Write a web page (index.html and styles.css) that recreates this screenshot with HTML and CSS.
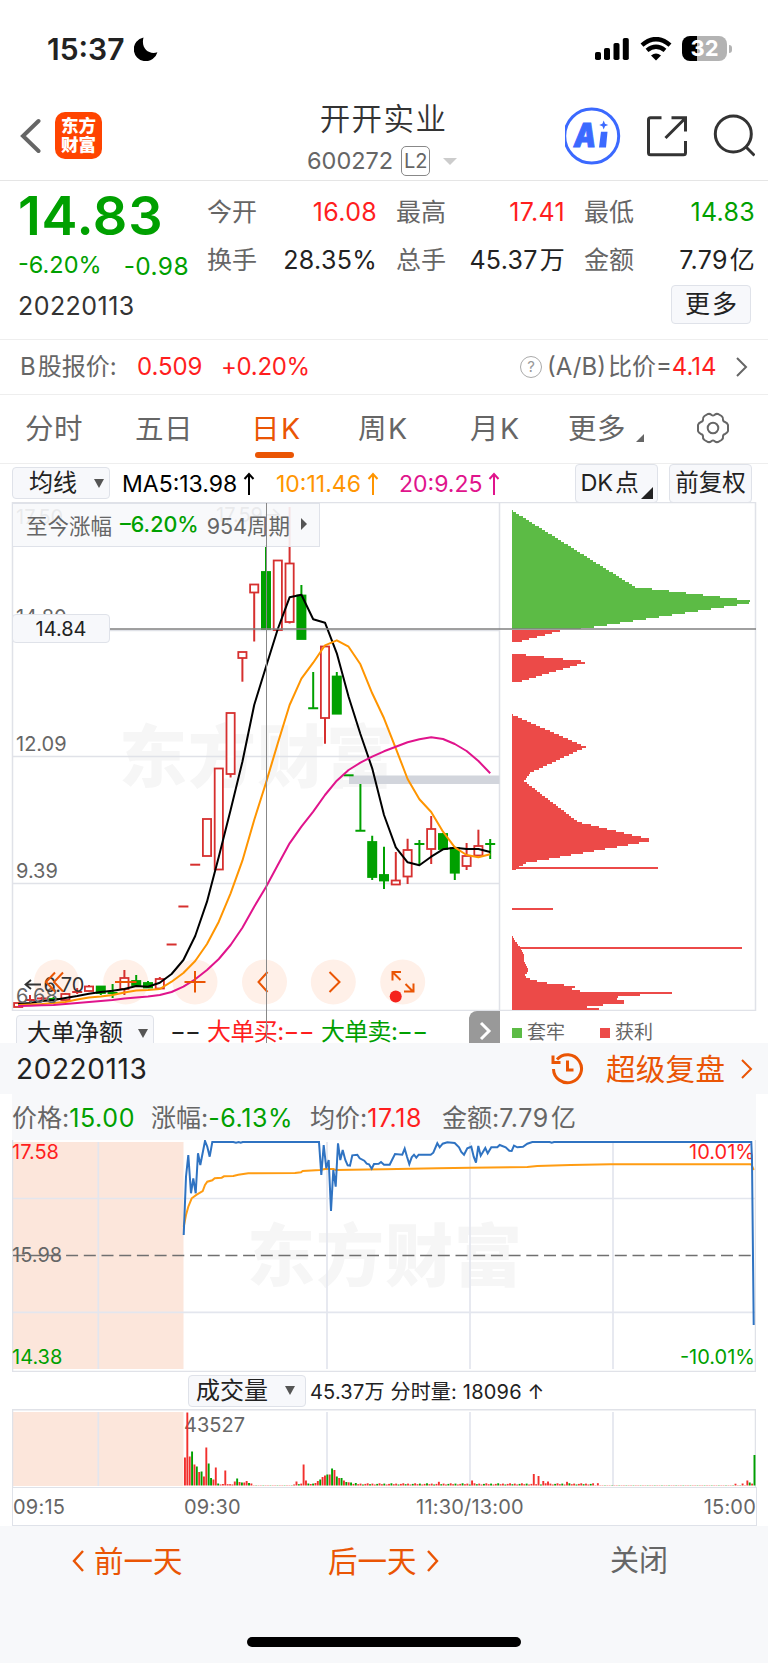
FILE: index.html
```html
<!DOCTYPE html>
<html lang="zh-CN">
<head>
    <meta charset="UTF-8">
    <meta name="viewport" content="width=device-width, initial-scale=1.0">
    <title>开开实业 600272</title>
    <link rel="stylesheet" href="styles.css">
</head>
<body>
    <div class="status-bar">
        <span class="clock">15:37</span>
        <svg class="moon" width="24" height="24" viewBox="0 0 24 24"><path d="M9.5 0.4A12 12 0 1 0 23.4 15.2C15.5 18 6.5 12 9.5 0.4Z"/></svg>
        <svg class="signal" width="34" height="24" viewBox="0 0 34 24">
            <rect x="0" y="15" width="6" height="8" rx="1.8"/>
            <rect x="9" y="11" width="6" height="12" rx="1.8"/>
            <rect x="18.5" y="6" width="6" height="17" rx="1.8"/>
            <rect x="27.8" y="1" width="6" height="22" rx="1.8"/>
        </svg>
        <svg class="wifi" width="32" height="24" viewBox="0 0 32 24">
            <path d="M2 8.2Q16 -4 30 8.2M7 13.4Q16 6.2 25 13.4" fill="none" stroke="#000" stroke-width="4.4"/>
            <path d="M11 18.4Q16 14.4 21 18.4L16 23.6Z"/>
        </svg>
        <div class="battery"><span>32</span></div>
        <i class="battery-cap"></i>
    </div>

    <header class="nav">
        <svg class="back" width="22" height="36" viewBox="0 0 22 36"><path d="M19.500 3L4 18L19.500 33" fill="none" stroke="#666" stroke-width="4" stroke-linecap="round"/></svg>
        <div class="logo">东方<br>财富</div>
        <div class="nav-title">
            <h1>开开实业</h1>
            <p>600272<span class="level">L2</span><i class="caret"></i></p>
        </div>
        <svg class="nav-icons" width="190" height="64" viewBox="566 104 190 64" fill="none" stroke="#333" stroke-width="3">
            <circle cx="592.7" cy="136" r="27" stroke="#3b69ff"/>
            <text class="ai" x="575" y="147" textLength="22" lengthAdjust="spacingAndGlyphs">A</text>
            <path d="M602 131.700h6.500l-1.500 15.800h-7z" fill="#3b69ff" stroke="none"/>
            <path d="M604.700 120.500l1.300 3.200 3.200 1.300-3.200 1.300-1.300 3.200-1.300-3.200-3.200-1.300 3.200-1.300z" fill="#3b69ff" stroke="none"/>
            <path d="M662.500 117.800H651.500Q649.500 117.800 649.500 119.800V152.800Q649.500 154.800 651.500 154.800H684.500Q686.500 154.800 686.500 152.800V141M672.500 117.800H686.500V131.500M686 118.500L666.500 138"/>
            <circle cx="734.300" cy="134" r="18"/>
            <path d="M747 147L755.500 155.500"/>
        </svg>
    </header>

    <section class="quote">
        <div class="quote-main">
            <div class="price down">14.83</div>
            <div class="change down"><span>-6.20%</span><span class="diff">-0.98</span></div>
            <div class="date">20220113</div>
        </div>
        <div class="quote-grid">
            <span>今开</span><b class="up">16.08</b>
            <span>最高</span><b class="up">17.41</b>
            <span>最低</span><b class="down">14.83</b>
            <span>换手</span><b>28.35%</b>
            <span>总手</span><b>45.37<em>万</em></b>
            <span>金额</span><b>7.79<em>亿</em></b>
            <button class="more">更多</button>
        </div>
    </section>

    <section class="bshare">
        <span class="b-label">B<em>股报价:</em></span>
        <span class="b-price up">0.509</span>
        <span class="b-rate up">+0.20%</span>
        <span class="help">?</span>
        <span class="ratio">(A/B)<em>比价=</em><b class="up">4.14</b></span>
        <svg width="14" height="24" viewBox="0 0 14 24"><path d="M2 3L11 12L2 21" fill="none" stroke="#666" stroke-width="2"/></svg>
    </section>

    <nav class="tabs">
        <a class="t1">分时</a>
        <a class="t2">五日</a>
        <a class="t3 active">日<em>K</em></a>
        <a class="t4">周<em>K</em></a>
        <a class="t5">月<em>K</em></a>
        <a class="t6">更多<i class="corner"></i></a>
        <svg class="gear" width="34" height="34" viewBox="-17 -17 34 34" fill="none" stroke="#666" stroke-width="2">
            <circle r="5.300"/>
            <path d="M-5 -14Q-2.500 -14.500 -1.500 -13Q0 -12 1.500 -13Q2.500 -14.500 5 -14L8.500 -12Q10.500 -10.500 10 -8.500Q10 -6.500 12 -6Q14.500 -5 15 -3V3Q14.500 5 12 6Q10 6.500 10 8.500Q10.500 10.500 8.500 12L5 14Q2.500 14.500 1.500 13Q0 12 -1.500 13Q-2.500 14.500 -5 14L-8.500 12Q-10.500 10.500 -10 8.500Q-10 6.500 -12 6Q-14.500 5 -15 3V-3Q-14.500 -5 -12 -6Q-10 -6.500 -10 -8.500Q-10.500 -10.500 -8.500 -12Z"/>
        </svg>
    </nav>

    <div class="ma-row">
        <button class="select ma-select">均线<i class="tri"></i></button>
        <span class="ma ma5">MA5:13.98<svg width="12" height="24" viewBox="0 0 12 24"><path d="M6 23V2M1.500 7L6 2L10.500 7"/></svg></span>
        <span class="ma ma10">10:11.46<svg width="12" height="24" viewBox="0 0 12 24"><path d="M6 23V2M1.500 7L6 2L10.500 7"/></svg></span>
        <span class="ma ma20">20:9.25<svg width="12" height="24" viewBox="0 0 12 24"><path d="M6 23V2M1.500 7L6 2L10.500 7"/></svg></span>
        <button class="tag dk">DK<em>点</em><i class="corner"></i></button>
        <button class="tag">前复权</button>
    </div>

    <div class="kline">
        <svg id="kline" width="768" height="509" viewBox="0 502 768 509">
            <text class="watermark" x="119" y="782">东方财富</text>
            <path class="frame" d="M12.500 502.500H755.500V1010.500H12.500ZM499.500 502.500V1010.500M12.500 630.500H499.500M12.500 756.500H499.500M12.500 883.500H499.500"/>
            <g class="axis">
                <text x="16" y="524">17.50</text>
                <text x="216" y="522">17.59→</text>
                <text x="16" y="624">14.80</text>
                <text x="16" y="750.500">12.09</text>
                <text x="16" y="877.500">9.39</text>
            </g>
            <rect x="349" y="775.500" width="150.500" height="8.500" fill="#d2d5dc"/>
            <g class="pads">
                <circle cx="56.500" cy="982" r="22.500"/><circle cx="125.700" cy="982" r="22.500"/><circle cx="195" cy="982" r="22.500"/>
                <circle cx="264.500" cy="982" r="22.500"/><circle cx="333.300" cy="982" r="22.500"/><circle cx="402.700" cy="982" r="22.500"/>
            </g>
            <g id="candles"></g>
            <g id="averages" fill="none" stroke-width="2" stroke-linejoin="round"></g>
            <g id="chips" shape-rendering="crispEdges"></g>
            <text class="axis" x="16" y="1003">6.68</text>
            <path d="M41 984.500H26M31 980L25.500 984.500L31 989" fill="none" stroke="#333" stroke-width="1.800"/>
            <text class="low" x="43.500" y="991.500">6.70</text>
            <g fill="none" stroke="#ea5504" stroke-width="2">
                <path d="M55 972.500L46 982L55 991.500M63 972.500L54 982L63 991.500"/>
                <path d="M115 982H136.500M184.500 982H205.500M195 971V992.500"/>
                <path d="M267.500 972L258.500 982L267.500 992M329.500 972L339.500 982L329.500 992"/>
                <path d="M392.500 980.500V972H401M393 972.500L400.500 980M413.500 983.500V991.500H404M413 991.500L405.500 984"/>
            </g>
            <circle cx="395.700" cy="996.500" r="6" fill="#f5221d"/>
            <path d="M110 629H756" stroke="#808080" stroke-width="1.700"/>
        </svg>
        <div class="gain">至今涨幅<b>–6.20%</b>954周期<i></i></div>
        <div class="cursor-price">14.84</div>
        <i class="crosshair"></i>
    </div>

    <div class="sub-row">
        <button class="select sub-select">大单净额<i class="tri"></i></button>
        <span class="none">−−</span>
        <span class="buy">大单买:−−</span>
        <span class="sell">大单卖:−−</span>
        <div class="expand"><svg width="14" height="22" viewBox="0 0 14 22"><path d="M3 3L11 11L3 19" fill="none" stroke="#fff" stroke-width="3"/></svg></div>
        <span class="legend"><i class="lock"></i>套牢</span>
        <span class="legend"><i class="win"></i>获利</span>
    </div>

    <section class="replay-head">
        <span class="replay-date">20220113</span>
        <svg width="34" height="34" viewBox="0 0 34 34" fill="none" stroke="#ea5504" stroke-width="3"><path d="M3.500 17A14 14 0 1 0 7 7.500M3 3.500V10.500H10.500M17.500 8.500V18H23.500"/></svg>
        <span class="replay-link">超级复盘</span>
        <svg width="14" height="22" viewBox="0 0 14 22"><path d="M2 2L11 11L2 20" fill="none" stroke="#ea5504" stroke-width="2"/></svg>
    </section>

    <section class="replay">
        <div class="replay-info">
            <span>价格:<b class="down">15.00</b></span>
            <span>涨幅:<b class="down">-6.13%</b></span>
            <span>均价:<b class="up">17.18</b></span>
            <span>金额:<b>7.79</b><em>亿</em></span>
        </div>
        <svg id="minute" width="744" height="232" viewBox="12 1140 744 232">
            <rect x="13" y="1142" width="170.500" height="227" fill="#fce6db"/>
            <text class="watermark" x="247" y="1281">东方财富</text>
            <path class="grid" d="M98.300 1142V1369M327 1142V1369M470 1142V1369M613 1142V1369M13 1198.500H755M13 1312.300H755"/>
            <path class="frame" d="M12.500 1140V1371.500H755.500V1140"/>
            <path d="M13 1255.500H752" stroke="#707070" stroke-width="1.500" stroke-dasharray="12 5.700"/>
            <g class="axis">
                <text class="up" x="12" y="1159">17.58</text>
                <text x="12" y="1261.500">15.98</text>
                <text class="down" x="12" y="1363.500">14.38</text>
                <text class="up" x="755" y="1159" text-anchor="end">10.01%</text>
                <text class="down" x="755" y="1363.500" text-anchor="end">-10.01%</text>
            </g>
        </svg>
        <div class="volume-row">
            <button class="select volume-select">成交量<i class="tri"></i></button>
            <span>45.37万 分时量: 18096 ↑</span>
        </div>
        <svg id="volume" width="744" height="78" viewBox="12 1409 744 78">
            <rect x="13" y="1412" width="170.500" height="74" fill="#fce6db"/>
            <path class="grid" d="M98.300 1412V1486M327 1412V1486M470 1412V1486M613 1412V1486"/>
            <path class="frame" d="M12.500 1487V1409.700H755.500V1487"/>
            <text class="axis" x="184" y="1431.500">43527</text>
        </svg>
        <div class="times"><span>09:15</span><span>09:30</span><span>11:30/13:00</span><span>15:00</span></div>
    </section>

    <footer class="footer">
        <a class="prev"><svg width="14" height="24" viewBox="0 0 14 24"><path d="M12 2L3 12L12 22"/></svg>前一天</a>
        <a class="next">后一天<svg width="14" height="24" viewBox="0 0 14 24"><path d="M2 2L11 12L2 22"/></svg></a>
        <a class="close">关闭</a>
        <div class="home-bar"></div>
    </footer>

    <script src="charts.js"></script>
</body>
</html>
```
FILE: charts.js
```js
const NS = 'http://www.w3.org/2000/svg';

function draw(parent, tag, attrs) {
    const el = document.createElementNS(NS, tag);
    for (const key in attrs) el.setAttribute(key, attrs[key]);
    parent.appendChild(el);
}

const RED = '#d6302f';
const GREEN = '#00a000';
const STEP = 11.8;
const START = 18.2;

// [color, high, body top, body bottom, low]
const candles = [
    ['r', 1003, 1003, 1007, 1007], ['r', 995, 1000, 1000, 1003], ['r', 997, 998.5, 998.5, 1000],
    ['g', 997, 999, 999, 1001], ['r', 993, 994, 1000, 1000], ['r', 988, 992, 992, 994],
    ['r', 985, 986.5, 991, 991], ['g', 986, 986.5, 993, 995], ['g', 984, 993, 993, 998],
    ['r', 970, 978, 989, 995], ['g', 975, 981, 985, 985], ['g', 981, 983, 987.5, 988],
    ['r', 977, 979, 988.5, 988.5], ['r', 944.5, 944.5, 944.5, 944.5], ['r', 906.5, 906.5, 906.5, 906.5],
    ['r', 864.7, 864.7, 864.7, 864.7], ['r', 819, 819, 856, 856], ['r', 768.5, 768.5, 869.5, 869.5],
    ['r', 713, 713, 774, 777.5], ['r', 652, 652, 658, 681.7], ['r', 584.5, 584.5, 592.5, 641.5],
    ['g', 545, 572, 629, 629], ['r', 560.5, 560.5, 630, 630], ['r', 507, 563.5, 622, 623.5],
    ['g', 585, 595.5, 639, 639], ['g', 672, 708.3, 708.3, 708.3], ['r', 646.5, 646.5, 718, 743.7],
    ['g', 672, 676.5, 713.7, 713.7], ['g', 775.3, 775.3, 775.3, 775.3], ['g', 784, 830.7, 830.7, 830.7],
    ['g', 835.7, 842, 877, 880], ['g', 846.7, 875, 880.5, 889], ['r', 852, 880.5, 884.5, 884.5],
    ['r', 838.7, 850, 876.5, 884], ['g', 840, 844, 844, 865], ['r', 816, 829, 849, 864],
    ['g', 833, 834, 849, 849], ['g', 847, 848, 872.7, 880], ['r', 843, 856, 866, 870],
    ['r', 829.7, 846, 855.5, 855.5], ['g', 839, 844, 844, 859]
];

const candleLayer = document.getElementById('candles');
candles.forEach(([c, high, top, bottom, low], i) => {
    const x = START + i * STEP;
    const color = c === 'r' ? RED : GREEN;
    if (top === bottom) {
        draw(candleLayer, 'path', { d: `M${x} ${high}V${low}M${x - 5} ${top}H${x + 5}`, stroke: color, 'stroke-width': 2 });
        return;
    }
    draw(candleLayer, 'path', { d: `M${x} ${high}V${top}M${x} ${bottom}V${low}`, stroke: color, 'stroke-width': 2 });
    draw(candleLayer, 'rect', {
        x: x - 4.1, y: top, width: 8.2, height: bottom - top,
        fill: c === 'r' ? '#fff' : color, stroke: color, 'stroke-width': 1.8
    });
});

// moving averages, one value per candle
const averages = {
    '#000': [1004, 1003, 1001, 1000, 998, 996, 993.7, 992, 990.7, 989, 986, 986.7, 982.7, 974, 960, 936, 901.7, 856.7, 810,
        761.7, 705, 666.7, 629, 597.3, 594.7, 619.3, 622.7, 653.3, 696.7, 734, 768.3, 815, 847.3, 862.3, 865.3, 856.7, 849.3,
        847.7, 849, 849, 852],
    '#ff9500': [1005, 1004.5, 1004, 1003, 1002, 999.5, 997.5, 996.5, 995, 992.5, 990.5, 990, 989, 981.7, 973, 961, 944, 921.7,
        893.3, 860.7, 820, 782.7, 743.3, 705, 678.7, 662.7, 645.3, 640.3, 646.7, 664.3, 693.3, 718.3, 748.3, 779, 799.3, 812,
        831.7, 847.3, 855, 857.3, 854.3],
    '#e0148c': [1006, 1005.7, 1005.3, 1005, 1004, 1003, 1002, 1001, 1000, 998.5, 997.5, 996.5, 995, 992, 986.7, 979.3, 970, 959,
        945, 927.7, 906.7, 887, 865, 843.3, 826.7, 811.7, 795, 780.7, 770, 762.7, 756.7, 751.3, 746.7, 742.3, 739.3, 737.3,
        739, 744, 751, 761, 773.3]
};

for (const color in averages) {
    const points = averages[color].map((y, i) => `${START + i * STEP},${y}`).join(' ');
    draw(document.getElementById('averages'), 'polyline', { points, stroke: color });
}

// chip distribution: [y, right edge] outlines filled with thin price bars
const chips = [
    { color: '#5cbb45', line: [[510, 513], [586, 635], [599, 745], [601, 755], [603, 743], [629, 575]] },
    { color: '#ec4a48', line: [[630, 560], [642, 514]] },
    { color: '#ec4a48', line: [[654, 526], [661, 590], [663, 580], [682, 515]] },
    { color: '#ec4a48', line: [[714, 513], [746, 586], [772, 530], [780, 524], [821, 578], [839, 653], [841, 645], [862, 526], [870, 512]] },
    { color: '#ec4a48', line: [[867, 657.5], [869, 657.5]] },
    { color: '#ec4a48', line: [[908, 552.5], [910, 552.5]] },
    { color: '#ec4a48', line: [[936, 512.5], [948, 521], [953, 524], [960, 524], [969, 528.5], [975, 524.5], [978, 530], [981, 540],
        [983.5, 557], [985, 577], [988.5, 571], [990.5, 583], [992, 672], [994, 640], [996, 618], [997.5, 609], [999, 632],
        [1001, 615], [1002.5, 628], [1004.5, 594], [1006, 587], [1008, 599], [1010, 627]] },
    { color: '#ec4a48', line: [[947, 741.5], [949, 741.5]] }
];

function edgeAt(line, y) {
    for (let i = 1; i < line.length; i++) {
        const [y0, x0] = line[i - 1];
        const [y1, x1] = line[i];
        if (y <= y1) return x0 + (x1 - x0) * Math.max(0, y - y0) / (y1 - y0);
    }
    return line[line.length - 1][1];
}

const chipLayer = document.getElementById('chips');
chips.forEach(({ color, line }) => {
    const end = line[line.length - 1][0];
    for (let y = line[0][0]; y < end; y += 2) {
        draw(chipLayer, 'rect', { x: 512, y, width: Math.max(1, edgeAt(line, y) - 512), height: Math.min(2, end - y), fill: color });
    }
});

// intraday lines, in thirds of a pixel from (0, 1060)
const price = [551,525, 558,350, 565,285, 573,400, 580,355, 587,400, 594,280, 601,315, 615,243, 622,260, 629,290, 637,246,
    700,246, 708,248, 716,246, 722,248, 728,246, 957,246, 964,345, 971,255, 979,325, 986,300, 993,453, 1000,330, 1007,380,
    1014,250, 1021,300, 1028,270, 1036,300, 1043,316, 1050,317, 1057,286, 1072,284, 1079,295, 1093,302, 1100,311, 1107,313,
    1115,326, 1122,312, 1136,311, 1143,306, 1152,314, 1169,314, 1176,300, 1185,282, 1207,284, 1214,266, 1221,290, 1228,312,
    1235,292, 1242,284, 1249,293, 1256,284, 1292,284, 1300,278, 1312,250, 1319,262, 1328,251, 1342,247, 1364,249, 1377,262,
    1384,276, 1392,284, 1402,265, 1414,260, 1421,290, 1428,308, 1435,258, 1442,287, 1456,264, 1463,280, 1474,262, 1492,262,
    1499,255, 1517,262, 1528,272, 1535,273, 1542,257, 1552,262, 1569,260, 1582,251, 1597,246, 1649,246, 1655,248, 1662,246,
    2254,246, 2256,300, 2261,795];
const average = [551,500, 558,465, 565,440, 575,415, 590,404, 608,393, 615,375, 622,365, 637,361, 644,355, 665,353, 672,349,
    700,348, 715,344, 745,340, 885,339, 903,337, 908,333, 960,330, 975,327, 1000,327, 1007,330, 1152,328, 1312,325, 1412,323,
    1582,321, 1612,318, 1712,315, 1832,313, 2254,313, 2257,320, 2261,330];

function intraday(values, color) {
    const points = values.map((v, i) => (i % 2 ? 1060 + v / 3 : v / 3).toFixed(1)).join(' ');
    draw(document.getElementById('minute'), 'polyline', { points, fill: 'none', stroke: color, 'stroke-width': 2 });
}

intraday(average, '#ff9c12');
intraday(price, '#2f73c2');

// volume bars: minute index -> [height, color]
const volumes = {
    0: [28, 'r'], 1: [73, 'r'], 2: [29, 'r'], 3: [34, 'g'], 4: [21, 'r'], 5: [19, 'g'], 6: [13.5, 'r'], 7: [14, 'g'],
    8: [9, 'r'], 9: [38, 'r'], 10: [22, 'g'], 11: [7.5, 'g'], 12: [6, 'r'], 13: [18, 'r'], 14: [2, 'g'], 15: [1, 'r'],
    16: [1.5, 'r'], 17: [15, 'r'], 18: [1.3, 'r'], 19: [1.3, 'r'], 21: [4, 'r'], 22: [7, 'g'], 23: [3.5, 'r'], 24: [3, 'g'],
    25: [3, 'r'], 26: [4.5, 'r'], 27: [2.5, 'g'], 28: [2, 'r'], 46: [1, 'r'], 47: [4, 'r'], 50: [21, 'r'], 51: [5, 'r'],
    52: [2, 'g'], 53: [1.5, 'r'], 55: [2.5, 'r'], 56: [4.5, 'r'], 57: [6, 'g'], 58: [8.5, 'r'], 59: [10, 'r'], 60: [11, 'g'],
    61: [11, 'r'], 62: [17, 'g'], 63: [15.5, 'r'], 64: [9, 'g'], 65: [7.5, 'r'], 66: [7.5, 'g'], 67: [5, 'r'], 68: [3.5, 'g'],
    69: [3.2, 'r'], 70: [3, 'g'], 72: [2.5, 'g'], 107: [3.7, 'r'], 121: [5, 'r'], 147: [11.5, 'r'], 149: [9.5, 'r'],
    151: [4.5, 'r'], 153: [4, 'r'], 161: [3.7, 'r'], 174: [2.3, 'r'], 232: [1.8, 'r'], 235: [2, 'r'], 237: [5, 'r'],
    238: [3, 'g'], 240: [30.5, 'g']
};

for (let i = 0; i <= 240; i++) {
    const quiet = (i > 28 && i < 47) || (i > 172 && i < 237);
    const [height, c] = volumes[i] || [quiet ? 0.3 : 1 + (i * 7 % 5) * 0.3, i % 3 ? 'r' : 'g'];
    draw(document.getElementById('volume'), 'rect', {
        x: 184 + i * 2.373, y: 1485.5 - height, width: 1.9, height, fill: c === 'r' ? '#f2302d' : GREEN
    });
}
```
FILE: styles.css
```css
* {
    box-sizing: border-box;
}

body {
    margin: 0;
    width: 768px;
    height: 1663px;
    overflow: hidden;
    background: #fff;
    color: #222;
    font-family: Inter, "Noto Sans CJK SC", sans-serif;
    font-weight: 400;
}

svg {
    display: block;
    flex: none;
}

em, b, i {
    font-style: normal;
    font-weight: inherit;
}

button {
    padding: 0;
    font: inherit;
    color: #222;
    background: #f7f8fb;
    border: 1.5px solid #dfe2e9;
    border-radius: 4px;
}

span, a, button {
    white-space: nowrap;
}

.up { color: #ff1e1e; }
.down { color: #00a000; }

/* status bar */
.status-bar {
    display: flex;
    align-items: center;
    height: 99px;
    padding: 0 0 2px 47px;
}

.clock {
    width: 87px;
    font-size: 30px;
    font-weight: 600;
}

.signal { margin-left: 437px; }
.wifi { margin-left: 11px; }

.battery {
    width: 45px;
    height: 25px;
    margin-left: 10px;
    border-radius: 8px;
    background: linear-gradient(90deg, #000 15px, #b3b3b3 15px);
    color: #fff;
    font-size: 22px;
    font-weight: 700;
    line-height: 25px;
    text-align: center;
}

.battery-cap {
    width: 3px;
    height: 8px;
    margin-left: 2px;
    border-radius: 0 4px 4px 0;
    background: #b3b3b3;
}

/* navigation */
.nav {
    display: flex;
    height: 82px;
    padding: 5px 12px 0 19px;
    border-bottom: 1.5px solid #e5e5e5;
}

.back { margin-top: 14px; }

.logo {
    width: 47px;
    height: 47px;
    margin: 8px 0 0 14px;
    padding-top: 4px;
    border-radius: 10px;
    background: #ff4400;
    color: #fff;
    font-size: 17.5px;
    font-weight: 900;
    line-height: 19px;
    text-align: center;
}

.nav-title {
    width: 260px;
    margin-left: 151px;
    text-align: center;
    color: #333;
}

.nav-title h1 {
    margin: 0;
    padding-left: 1px;
    font-size: 30.5px;
    font-weight: 350;
    line-height: 30px;
    letter-spacing: 1.4px;
}

.nav-title p {
    display: flex;
    align-items: center;
    margin: 10px 0 0 54px;
    color: #666;
    font-size: 23.5px;
    line-height: 34px;
}

.level {
    width: 29px;
    height: 30px;
    margin-left: 8px;
    border: 1.5px solid #888;
    border-radius: 5px;
    font-size: 20px;
    line-height: 28px;
    text-align: center;
}

.caret {
    margin-left: 13px;
    border: 7px solid transparent;
    border-top-color: #ccc;
    border-bottom: 0;
}

.nav-icons { margin-left: 52px; }

.ai {
    font-size: 33px;
    font-weight: 900;
    font-style: italic;
    fill: #3b69ff;
    stroke: #3b69ff;
    stroke-width: 1;
}

/* quote */
.quote {
    display: flex;
    height: 159px;
    padding-left: 18px;
    border-bottom: 1px solid #eee;
}

.quote-main { width: 189px; }

.price {
    padding-top: 8px;
    font-size: 54px;
    font-weight: 600;
    line-height: 54px;
    letter-spacing: 0.7px;
}

.change {
    display: flex;
    margin-top: 7px;
    font-size: 23.5px;
    line-height: 30px;
}

.change .diff {
    margin: 1px 18px 0 auto;
    font-size: 24.5px;
    letter-spacing: 0.4px;
}

.date {
    margin-top: 10px;
    font-size: 25px;
    line-height: 30px;
    letter-spacing: 0.45px;
    color: #333;
}

.quote-grid {
    display: grid;
    grid-template-columns: 50px 120px 69px 119px 70px 120px;
    grid-template-rows: 48px 47px 37px;
    align-items: center;
    height: 143px;
    padding-top: 7px;
    font-size: 25px;
    line-height: 40px;
}

.quote-grid > span { color: #666; }
.quote-grid > span:nth-of-type(3n+2), .quote-grid > span:nth-of-type(3n) { padding-left: 19px; }
.quote-grid > b { text-align: right; font-weight: 400; letter-spacing: 0.3px; }
.quote-grid em { margin-left: 2px; }

.more {
    grid-column: 6;
    justify-self: end;
    width: 80px;
    height: 39px;
    margin: 5px 4px 0 0;
    line-height: 34px;
    letter-spacing: 2px;
    text-indent: 2px;
}

/* B share price */
.bshare {
    display: flex;
    align-items: center;
    height: 55px;
    padding-left: 20px;
    border-bottom: 1px solid #eee;
    color: #666;
    font-size: 24px;
    line-height: 40px;
}

.bshare em { margin-left: 2px; }
.b-label { width: 117px; }
.b-price { width: 84px; letter-spacing: -0.1px; }
.b-rate { width: 299px; letter-spacing: -0.3px; }

.help {
    width: 22px;
    height: 22px;
    margin-right: 5px;
    border: 1.5px solid #aaa;
    border-radius: 50%;
    color: #999;
    font-size: 15px;
    line-height: 19px;
    text-align: center;
}

.ratio { width: 188px; }

/* period tabs */
.tabs {
    display: flex;
    height: 69px;
    padding-left: 25px;
    border-bottom: 1px solid #eee;
    color: #666;
    font-size: 28.5px;
    line-height: 67px;
}

.tabs a { position: relative; letter-spacing: 0.5px; }
.tabs em { margin-left: 1px; }
.t1 { width: 110px; }
.t2 { width: 116px; }
.t3 { width: 107px; }
.t4 { width: 112px; }
.t5 { width: 98px; }
.t6 { width: 128px; }
.gear { margin-top: 16px; }

.tabs .active { color: #ea5504; }

.tabs .active::after {
    content: "";
    position: absolute;
    left: 4px;
    bottom: 5px;
    width: 39px;
    height: 6px;
    border-radius: 3px;
    background: #ea5504;
}

.corner {
    display: inline-block;
    border: 4px solid transparent;
    border-right-color: #666;
    border-bottom-color: #666;
}

.tabs .corner {
    margin-left: 10px;
    vertical-align: -3px;
}

/* moving average row */
.ma-row {
    display: flex;
    align-items: center;
    height: 38px;
    padding-left: 12px;
    font-size: 23px;
    line-height: 28px;
}

.select {
    display: flex;
    align-items: center;
    height: 32px;
    font-size: 24px;
    line-height: 28px;
}

.tri {
    margin-left: auto;
    border: 5px solid transparent;
    border-top: 9px solid #555;
    border-bottom: 0;
}

.ma-select {
    width: 98px;
    padding: 0 5px 0 16px;
}

.ma { display: flex; align-items: center; padding-top: 1px; }
.ma svg { margin-left: 6px; fill: none; stroke: currentColor; stroke-width: 2; }
.ma5 { width: 154px; margin-left: 12px; color: #000; }
.ma10 { width: 123px; color: #ff9500; }
.ma20 { width: 176px; color: #e0148c; }

.tag {
    position: relative;
    width: 83px;
    height: 39px;
    margin-right: 11px;
    font-size: 23.5px;
    line-height: 34px;
}

.dk { padding-right: 14px; }
.dk em { margin-left: 2px; }

.dk .corner {
    position: absolute;
    right: 4px;
    bottom: 3px;
    border-width: 6px;
    border-right-color: #222;
    border-bottom-color: #222;
}

/* daily chart */
.kline {
    position: relative;
    height: 509px;
}

.frame {
    fill: none;
    stroke: #e0e2e8;
    stroke-width: 1.5;
}

.grid {
    fill: none;
    stroke: #e3e6ee;
    stroke-width: 1.7;
}

.watermark {
    font-size: 68px;
    font-weight: 900;
    letter-spacing: 1px;
    fill: #f6f6f6;
}

.axis {
    font-size: 20px;
    fill: #666;
}

.axis .up { fill: #ff1e1e; }
.axis .down { fill: #00a000; }
.low { font-size: 20px; fill: #333; }
.pads { fill: #fff0e8; }

.gain {
    position: absolute;
    left: 12px;
    top: 1px;
    display: flex;
    align-items: center;
    width: 308px;
    height: 44px;
    padding: 0 0 2px 13px;
    background: rgba(247, 248, 251, 0.9);
    border: 1.5px solid #dfe2e9;
    color: #666;
    font-size: 21.5px;
}

.gain b {
    margin: 0 8px;
    color: #00a000;
    font-weight: 500;
}

.gain i {
    margin-left: 11px;
    border: 6px solid transparent;
    border-left-color: #555;
    border-right: 0;
}

.cursor-price {
    position: absolute;
    left: 12px;
    top: 112px;
    width: 98px;
    height: 29px;
    background: #f7f8fb;
    border: 1.5px solid #dfe2e9;
    border-radius: 4px;
    font-size: 20px;
    line-height: 28px;
    text-align: center;
}

/* vertical line runs on through the row below */
.crosshair {
    position: absolute;
    left: 266px;
    top: 1px;
    width: 1px;
    height: 540px;
    background: #888;
}

/* sub indicator row */
.sub-row {
    display: flex;
    height: 32px;
    padding-left: 16px;
    overflow: hidden;
    font-size: 24px;
    line-height: 41px;
}

.sub-select {
    width: 138px;
    height: 36px;
    margin: 4px 16px 0 0;
    padding: 0 5px 0 10px;
}

.none { width: 37px; letter-spacing: -1px; }
.buy { width: 114px; color: #ff1e1e; letter-spacing: -0.6px; }
.sell { width: 148px; color: #00a000; letter-spacing: -0.7px; }

.expand {
    display: flex;
    align-items: center;
    justify-content: center;
    width: 31px;
    height: 33px;
    margin-right: 12px;
    padding-top: 6px;
    border-radius: 8px 0 0 0;
    background: #999;
}

.legend {
    display: flex;
    align-items: center;
    width: 88px;
    padding-top: 12px;
    color: #666;
    font-size: 19px;
    line-height: 20px;
}

.legend i {
    width: 10px;
    height: 10px;
    margin-right: 5px;
}

.lock { background: #5cbb45; }
.win { background: #ec4a48; }

/* intraday replay */
.replay-head {
    display: flex;
    align-items: center;
    height: 51px;
    padding-left: 16px;
    background: #f7f8fa;
    color: #ea5504;
}

.replay-date {
    width: 534px;
    color: #222;
    font-size: 28px;
    letter-spacing: 0.6px;
}

.replay-link {
    width: 134px;
    margin-left: 22px;
    padding-bottom: 3px;
    font-size: 29.5px;
    letter-spacing: 0.3px;
}

.replay { margin: 0 12px; }

.replay-info {
    display: grid;
    grid-template-columns: 139px 159px 132px 1fr;
    height: 46px;
    background: #f7f8fa;
    color: #666;
    font-size: 25px;
    line-height: 48px;
}

.replay-info b { letter-spacing: 0.6px; }
.replay-info em { margin-left: 2px; }

.volume-row {
    display: flex;
    align-items: center;
    height: 37px;
    padding-left: 176px;
    color: #222;
    font-size: 20px;
    letter-spacing: 0.2px;
}

.volume-select {
    width: 118px;
    margin-right: 4px;
    padding: 0 10px 0 7px;
    letter-spacing: 0;
}

.times {
    display: grid;
    grid-template-columns: 171px 158px 256px 1fr;
    height: 39px;
    margin-right: -1px;
    border: 1.5px solid #dfe2e9;
    color: #666;
    font-size: 20px;
    line-height: 38px;
    letter-spacing: 0.2px;
}

.times span:nth-child(3) { text-align: center; }
.times span:last-child { text-align: right; }

/* footer */
.footer {
    position: relative;
    display: flex;
    height: 137px;
    padding-left: 71px;
    background: #f7f8fa;
    color: #ea5504;
    font-size: 29.5px;
    line-height: 70px;
}

.footer a { display: flex; align-items: center; height: 70px; }
.footer svg { fill: none; stroke: currentColor; stroke-width: 2.4; }
.prev { width: 257px; }
.prev svg { margin-right: 9px; }
.next { width: 282px; }
.next svg { margin-left: 9px; }
.close { color: #666; font-size: 29px; }

.home-bar {
    position: absolute;
    left: 247px;
    bottom: 16px;
    width: 274px;
    height: 10px;
    border-radius: 5px;
    background: #000;
}
```
